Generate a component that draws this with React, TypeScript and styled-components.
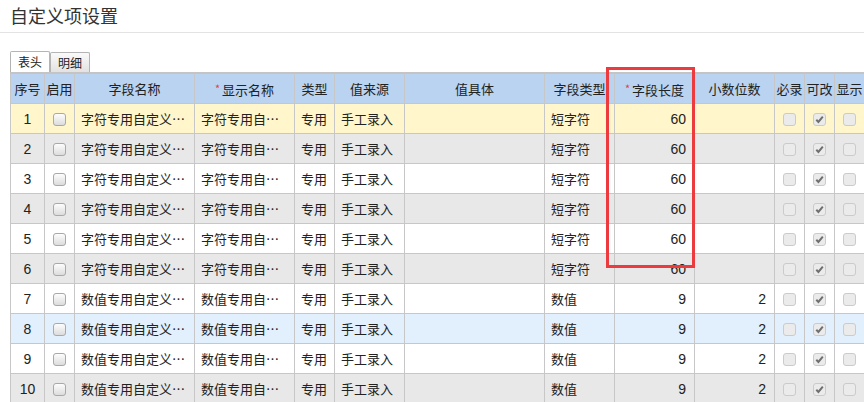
import { FC } from 'react'
import styled, { createGlobalStyle } from 'styled-components'

const GlobalStyle = createGlobalStyle`
  html, body {
    margin: 0;
    padding: 0;
    background: #fff;
    font-family: 'Noto Sans CJK SC', 'Liberation Sans', sans-serif;
    color: #333;
  }
`

type RowTone = 'selected' | 'plain' | 'alt' | 'hover'

interface FieldRow {
  name: string
  label: string
  fieldType: string
  length: number
  decimals?: number
}

const textRow = (n: number): FieldRow => ({
  name: `字符专用自定义项${n}`,
  label: `字符专用自定义项${n}`,
  fieldType: '短字符',
  length: 60,
})

const numberRow = (n: number): FieldRow => ({
  name: `数值专用自定义项${n}`,
  label: `数值专用自定义项${n}`,
  fieldType: '数值',
  length: 9,
  decimals: 2,
})

const rows: FieldRow[] = [
  textRow(1),
  textRow(2),
  textRow(3),
  textRow(4),
  textRow(5),
  textRow(6),
  numberRow(1),
  numberRow(2),
  numberRow(3),
  numberRow(4),
]

const tones: RowTone[] = [
  'selected',
  'alt',
  'plain',
  'alt',
  'plain',
  'alt',
  'plain',
  'hover',
  'plain',
  'alt',
]

const toneColor: { [key in RowTone]: string } = {
  selected: '#fff6cb',
  plain: '#ffffff',
  alt: '#e8e8e8',
  hover: '#e2effd',
}

const columns = [34, 30, 120, 100, 40, 70, 140, 70, 80, 80, 30, 30, 30, 40]

const Page = styled.div`
  position: relative;
  width: 864px;
  height: 402px;
  overflow: hidden;
`

const TitleBar = styled.div`
  height: 32px;
  padding-left: 10px;
  border-bottom: 1px solid #e3e3e3;
  font-size: 18px;
  line-height: 31px;
  color: #333;
`

const Body = styled.div`
  padding-left: 10px;
`

const TabStrip = styled.div`
  display: flex;
  align-items: flex-end;
  margin-top: 18px;
  height: 21px;
  border-bottom: 1px solid #c4c4c4;
`

const Tab = styled.div<{ active?: boolean }>`
  width: 40px;
  height: ${(p) => (p.active ? '21px' : '20px')};
  box-sizing: border-box;
  border: 1px solid #b4b4b4;
  border-bottom: none;
  border-radius: 2px 2px 0 0;
  background: ${(p) =>
    p.active ? '#ffffff' : 'linear-gradient(#fafafa, #e2e2e2)'};
  font-size: 12px;
  line-height: ${(p) => (p.active ? '20px' : '19px')};
  text-align: center;
  color: #222;
`

const Grid = styled.table`
  border-collapse: collapse;
  table-layout: fixed;
  width: ${columns.reduce((a, b) => a + b, 0)}px;
  font-size: 13px;
`

const HeadCell = styled.th`
  height: 29px;
  padding: 0;
  border: 1px solid #c7c7c7;
  border-top: 1px solid #c4c4c4;
  background: #b9d3f1;
  font-weight: normal;
  line-height: 18px;
  color: #222;
  text-align: center;
  white-space: nowrap;
  overflow: hidden;
`

const Star = styled.span`
  color: #e5404a;
  font-size: 11px;
  margin-right: 2px;
  vertical-align: 2px;
`

const BodyRow = styled.tr<{ tone: RowTone }>`
  height: 30px;
  background: ${(p) => toneColor[p.tone]};
`

const Cell = styled.td<{ align?: 'left' | 'center' | 'right'; numeric?: boolean }>`
  height: 29px;
  padding: 0 ${(p) => (p.align === 'right' ? '8px' : '6px')};
  border: 1px solid #c7c7c7;
  font-family: ${(p) =>
    p.numeric ? "'Liberation Sans', sans-serif" : 'inherit'};
  font-size: ${(p) => (p.numeric ? '14px' : '13px')};
  line-height: 18px;
  text-align: ${(p) => p.align || 'left'};
  white-space: nowrap;
  overflow: hidden;
  text-overflow: ellipsis;
  color: #222;
`

const Box = styled.span<{ disabled?: boolean }>`
  display: inline-flex;
  align-items: center;
  justify-content: center;
  width: 13px;
  height: 13px;
  box-sizing: border-box;
  border: 1px solid ${(p) => (p.disabled ? '#cbcbcb' : '#a9a9a9')};
  border-radius: 3px;
  background: ${(p) =>
    p.disabled ? '#ebebeb' : 'linear-gradient(#fdfdfd, #dcdcdc)'};
  vertical-align: middle;
`

const Highlight = styled.div`
  position: absolute;
  left: 606px;
  top: 67px;
  width: 89px;
  height: 201px;
  box-sizing: border-box;
  border: 3px solid #ec3b3f;
  pointer-events: none;
`

const Checkbox: FC<{ disabled?: boolean; checked?: boolean }> = ({
  disabled,
  checked,
}) => (
  <Box disabled={disabled}>
    {checked && (
      <svg width="9" height="9" viewBox="0 0 9 9">
        <path
          d="M1.3 4.8 L3.4 6.9 L7.8 1.6"
          fill="none"
          stroke="#6f6f6f"
          strokeWidth="2"
        />
      </svg>
    )}
  </Box>
)

const headers: { label: string; required?: boolean }[] = [
  { label: '序号' },
  { label: '启用' },
  { label: '字段名称' },
  { label: '显示名称', required: true },
  { label: '类型' },
  { label: '值来源' },
  { label: '值具体' },
  { label: '字段类型' },
  { label: '字段长度', required: true },
  { label: '小数位数' },
  { label: '必录' },
  { label: '可改' },
  { label: '显示' },
  { label: '' },
]

export default function App() {
  return (
    <Page>
      <GlobalStyle />
      <TitleBar>自定义项设置</TitleBar>
      <Body>
        <TabStrip>
          <Tab active>表头</Tab>
          <Tab>明细</Tab>
        </TabStrip>
        <Grid>
          <colgroup>
            {columns.map((w, i) => (
              <col key={i} style={{ width: w }} />
            ))}
          </colgroup>
          <thead>
            <tr>
              {headers.map((h, i) => (
                <HeadCell key={i}>
                  {h.required && <Star>*</Star>}
                  {h.label}
                </HeadCell>
              ))}
            </tr>
          </thead>
          <tbody>
            {rows.map((row, i) => (
              <BodyRow key={i} tone={tones[i]}>
                <Cell align="center" numeric>
                  {i + 1}
                </Cell>
                <Cell align="center">
                  <Checkbox />
                </Cell>
                <Cell>{row.name}</Cell>
                <Cell>{row.label}</Cell>
                <Cell>专用</Cell>
                <Cell>手工录入</Cell>
                <Cell />
                <Cell>{row.fieldType}</Cell>
                <Cell align="right" numeric>
                  {row.length}
                </Cell>
                <Cell align="right" numeric>
                  {row.decimals ?? ''}
                </Cell>
                <Cell align="center">
                  <Checkbox disabled />
                </Cell>
                <Cell align="center">
                  <Checkbox disabled checked />
                </Cell>
                <Cell align="center">
                  <Checkbox disabled />
                </Cell>
                <Cell />
              </BodyRow>
            ))}
          </tbody>
        </Grid>
      </Body>
      <Highlight />
    </Page>
  )
}
